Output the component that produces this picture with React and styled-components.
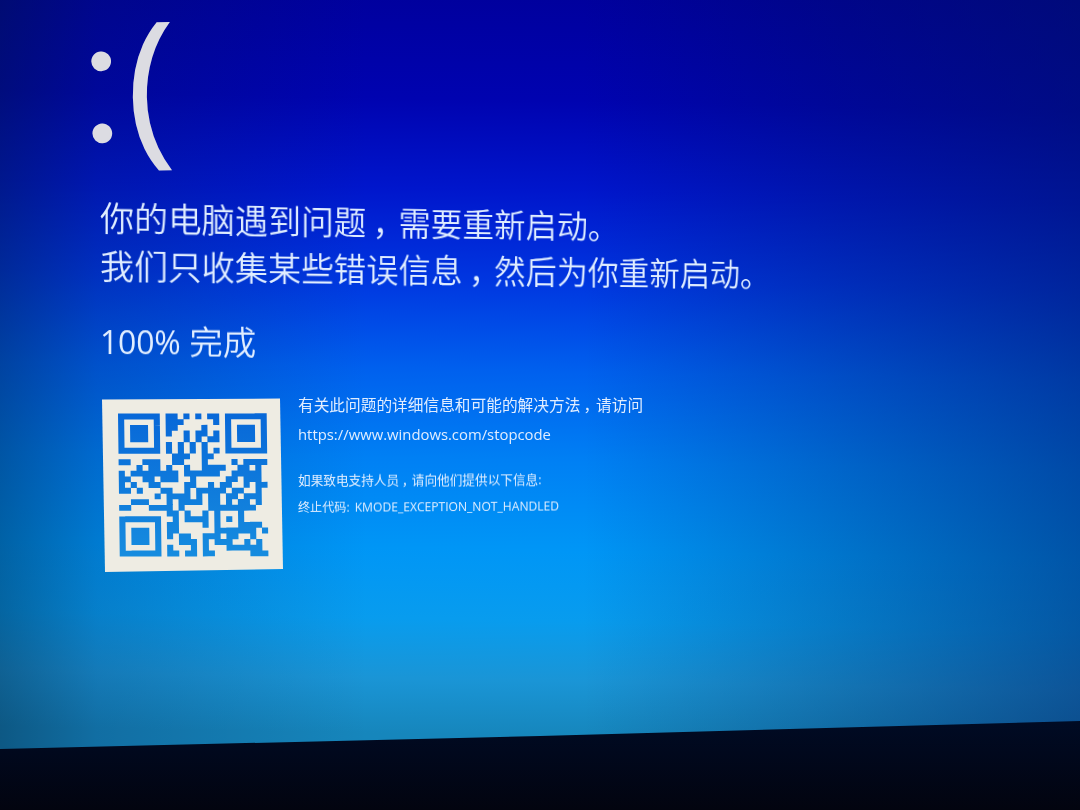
import React from 'react';
import styled, { createGlobalStyle } from 'styled-components';

const GlobalStyle = createGlobalStyle`
  * { box-sizing: border-box; }
  body { margin: 0; background: #01030f; overflow: hidden; }
`;

const Screen = styled.div`
  width: 1080px;
  height: 810px;
  display: flex;
  flex-direction: column;
  overflow: hidden;
  color: #e0edff;
  font-family: 'Open Sans', 'Noto Sans CJK SC', sans-serif;
  background:
    linear-gradient(90deg, rgba(0, 25, 55, 0.42) 0%, rgba(0, 25, 75, 0.22) 9%, rgba(0, 20, 80, 0) 34%, rgba(0, 20, 80, 0) 54%, rgba(0, 20, 80, 0.26) 78%, rgba(0, 20, 90, 0.5) 100%),
    linear-gradient(181deg, #00009c 0px, #0003b0 110px, #0016cc 200px, #0036e0 290px, #0060ee 380px, #0080f4 470px, #0096f6 560px, #089cee 630px, #1a95d6 690px, #1686bc 745px);
`;

const Content = styled.main`
  flex: 1;
  display: flex;
  flex-direction: column;
  align-items: flex-start;
  padding-left: 100px;
`;

const Face = styled.div`
  display: flex;
  height: 194px;
  margin-left: -20px;
  font-family: 'Open Sans', sans-serif;
  font-size: 170px;
  line-height: 156px;
  white-space: nowrap;
  color: #dcdce2;
  transform: rotate(-0.9deg);
`;

const Eyes = styled.span`
  width: 46px;
  font-family: 'Lato', sans-serif;
  font-size: 181px;
  font-weight: 300;
  line-height: 141px;
  -webkit-text-stroke: 3px #dcdce2;
`;

const Line = styled.p`
  margin: 0;
  height: ${(p) => p.$height}px;
  line-height: ${(p) => p.$height}px;
  font-size: ${(p) => p.$size}px;
  font-weight: ${(p) => p.$weight || 350};
  white-space: nowrap;
  transform-origin: 0 50%;
  transform: matrix3d(1, ${(p) => p.$slope || 0}, 0, ${(p) => p.$shrink || 0}, 0, 1, 0, 0, 0, 0, 1, 0, 0, 0, 0, 1);
`;

const Comma = styled.span`
  padding-left: 0.2em;
  letter-spacing: -0.2em;
`;

const Progress = styled(Line)`
  margin-top: 23px;
`;

const Percent = styled.span`
  font-size: 32px;
  font-weight: 400;
  letter-spacing: -0.2px;
`;

const Support = styled.section`
  display: flex;
  gap: 14px;
  margin: 29px 0 0 1px;
`;

const Details = styled.div`
  display: flex;
  flex-direction: column;
  margin-top: -7px;
`;

const Group = styled.div`
  margin-bottom: 18px;
`;

const StopCode = styled(Line)`
  margin-top: 2px;
  word-spacing: 2px;
`;

const Code = styled.svg`
  display: block;
  width: 183px;
  height: 176px;
`;

const Bezel = styled.footer`
  height: 89px;
  background: linear-gradient(180deg, #000b24 0%, #01081d 35%, #02040f 100%);
  clip-path: polygon(0 28px, 50% 15px, 100% 0, 100% 100%, 0 100%);
`;

const MODULES = [
  '1111111.11.1.1.11.1111111',
  '1.....1.111.....1.1.....1',
  '1.111.1.11....1...1.111.1',
  '1.111.1.1..1.11.1.1.111.1',
  '1.111.1....1.1.11.1.111.1',
  '1.....1.1.1.1.1...1.....1',
  '1111111.1.1.1.1.1.1111111',
  '.........111..11.........',
  '11..111..11...1....1.1111',
  '...1.11.1..1..1111..11.1.',
  '1.11111111.111111..11111.',
  '11..11.111..1.....11.111.',
  '1.1..11....11..1.11..1.11',
  '11.1...11..1.11111.11..1.',
  '......1.1111.1.11.11.111.',
  '..111...1.1111.11.1.11.1.',
  '11...1111.1....11111111..',
  '........11.1..1.1...1....',
  '1111111..1.1111.1.1.1....',
  '1.....1.11....1.1...1111.',
  '1.111.1.11......1111111.1',
  '1.111.1.1.11..111.11..1..',
  '1.111.1...111.1.111..1.1.',
  '1.....1.1...1.1...111111.',
  '1111111.11.11.11......111',
];

function StopCodeQr() {
  return (
    <Code viewBox="0 0 183 176" role="img" aria-label="QR">
      <defs>
        <linearGradient id="ink" x1="0" y1="0" x2="0" y2="1">
          <stop offset="0" stopColor="#0868d8" />
          <stop offset="1" stopColor="#168cdf" />
        </linearGradient>
      </defs>
      <polygon points="1,1.5 179,0.5 182,171 4,174" fill="#eeece3" />
      <g transform="matrix(5.94 -0.01 0.07 5.71 17 15.6)">
        <path
          fill="url(#ink)"
          d={MODULES.map((row, y) =>
            [...row].map((cell, x) => (cell === '1' ? `M${x} ${y}h1.03v1.03h-1.03z` : '')).join('')
          ).join('')}
        />
      </g>
    </Code>
  );
}

export default function App() {
  return (
    <>
      <GlobalStyle />
      <Screen>
        <Content>
          <Face>
            <Eyes>:</Eyes>
            <span>(</span>
          </Face>
          <Line $size={34.2} $height={48} $slope={0.017} $shrink={0.0001}>
            你的电脑遇到问题<Comma>，</Comma>需要重新启动。
          </Line>
          <Line $size={34.2} $height={48} $slope={0.013} $shrink={0.0001}>
            我们只收集某些错误信息<Comma>，</Comma>然后为你重新启动。
          </Line>
          <Progress $size={33.5} $height={56} $slope={0.005}>
            <Percent>100%</Percent> 完成
          </Progress>
          <Support>
            <StopCodeQr />
            <Details>
              <Group>
                <Line $size={15.7} $height={29} $weight={400}>
                  有关此问题的详细信息和可能的解决方法<Comma>，</Comma>请访问
                </Line>
                <Line $size={14.85} $height={29} $weight={400}>https://www.windows.com/stopcode</Line>
              </Group>
              <Line $size={12.65} $height={26} $weight={400} $slope={-0.003}>
                如果致电支持人员<Comma>，</Comma>请向他们提供以下信息:
              </Line>
              <StopCode $size={12.1} $height={26} $weight={400} $slope={-0.006}>
                终止代码: KMODE_EXCEPTION_NOT_HANDLED
              </StopCode>
            </Details>
          </Support>
        </Content>
        <Bezel />
      </Screen>
    </>
  );
}
